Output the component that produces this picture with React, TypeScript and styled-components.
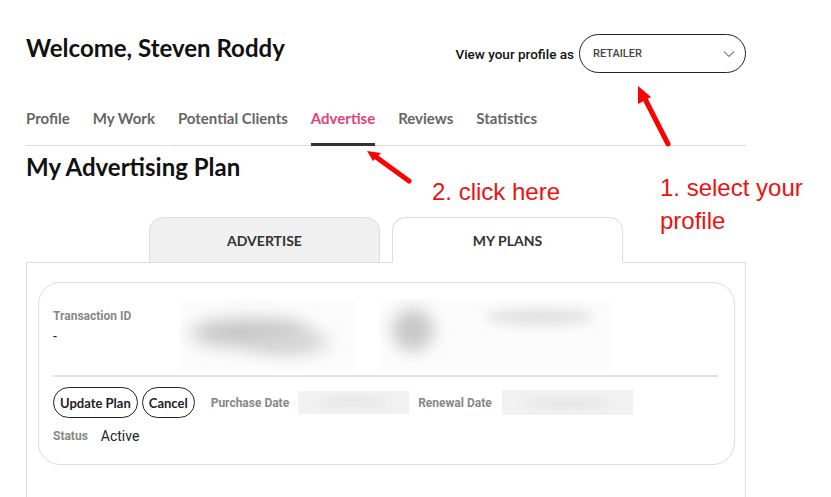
import styled, { createGlobalStyle } from "styled-components";

const GlobalStyle = createGlobalStyle`
    html, body {
        margin: 0;
        padding: 0;
        background: #fff;
    }
    body {
        font-family: Lato, "Noto Sans", sans-serif;
        color: #222;
    }
`;

const Page = styled.div`
    position: relative;
    width: 831px;
    height: 497px;
    overflow: hidden;
    background: #fff;
`;

const Main = styled.div`
    width: 720px;
    margin-left: 26px;
    display: flex;
    flex-direction: column;
`;

const Header = styled.div`
    display: flex;
    justify-content: space-between;
    align-items: flex-start;
    padding-top: 33px;
`;

const Title = styled.h1`
    margin: 0;
    font-size: 24px;
    line-height: 30px;
    font-weight: 700;
    color: #111;
`;

const ProfileSwitch = styled.div`
    display: flex;
    align-items: center;
    gap: 5px;
    margin-top: 1px;
`;

const SwitchLabel = styled.span`
    font-family: Roboto, "Liberation Sans", sans-serif;
    font-size: 13.5px;
    font-weight: 500;
    color: #111;
`;

const Select = styled.div`
    width: 167px;
    height: 39px;
    box-sizing: border-box;
    border: 1px solid #222;
    border-radius: 20px;
    display: flex;
    align-items: center;
    justify-content: space-between;
    padding: 0 10px 0 13px;
    font-family: Roboto, "Liberation Sans", sans-serif;
    font-size: 11px;
    font-weight: 500;
    color: #444;
`;

const NavBar = styled.nav`
    display: flex;
    gap: 23px;
    margin-top: 35px;
    border-bottom: 1px solid #ddd;
`;

const NavItem = styled.span<{ $active?: boolean }>`
    font-size: 15px;
    line-height: 20px;
    font-weight: 700;
    padding-bottom: 15px;
    color: ${(p) => (p.$active ? "#e8407b" : "#666")};
    border-bottom: 3px solid ${(p) => (p.$active ? "#333" : "transparent")};
    margin-bottom: -1px;
`;

const SectionTitle = styled.h2`
    margin: 6px 0 0;
    font-size: 24px;
    line-height: 30px;
    font-weight: 700;
    color: #111;
`;

const TabBar = styled.div`
    display: flex;
    justify-content: center;
    gap: 12px;
    margin-top: 35px;
    position: relative;
    z-index: 1;
    margin-bottom: -1px;
`;

const Tab = styled.div<{ $active?: boolean }>`
    width: 231px;
    height: 46px;
    box-sizing: border-box;
    display: flex;
    align-items: center;
    justify-content: center;
    border: 1px solid #ddd;
    border-bottom-color: ${(p) => (p.$active ? "#fff" : "#ddd")};
    border-radius: 14px 14px 0 0;
    background: ${(p) => (p.$active ? "#fff" : "#f0f0f0")};
    font-size: 14px;
    font-weight: 700;
    color: #333;
`;

const Panel = styled.div`
    border: 1px solid #ddd;
    height: 260px;
    padding: 19px 10px 0 11px;
`;

const Card = styled.div`
    border: 1px solid #ddd;
    border-radius: 22px;
    padding: 16px 16px 19px 14px;
    display: flex;
    flex-direction: column;
`;

const TopRow = styled.div`
    display: flex;
    height: 72px;
`;

const InfoCol = styled.div`
    width: 127px;
    padding-top: 10px;
    display: flex;
    flex-direction: column;
    gap: 5px;
`;

const Label = styled.span`
    font-family: Roboto, "Liberation Sans", sans-serif;
    font-size: 12px;
    font-weight: 700;
    color: #888;
`;

const Value = styled.span`
    font-family: Roboto, "Liberation Sans", sans-serif;
    font-size: 14px;
    color: #222;
`;

const Blurred = styled.div<{ $w: number; $bg?: string }>`
    width: ${(p) => p.$w}px;
    height: 100%;
    position: relative;
    overflow: hidden;
    background: ${(p) => p.$bg ?? "#fcfcfc"};
`;

const Smudge = styled.div<{ $x: number; $y: number; $w: number; $h: number; $c: string; $b: number }>`
    position: absolute;
    left: ${(p) => p.$x}px;
    top: ${(p) => p.$y}px;
    width: ${(p) => p.$w}px;
    height: ${(p) => p.$h}px;
    background: ${(p) => p.$c};
    border-radius: 50%;
    filter: blur(${(p) => p.$b}px);
`;

const Divider = styled.div`
    margin-top: 4px;
    border-top: 2px solid #e2e2e2;
`;

const ActionRow = styled.div`
    display: flex;
    align-items: center;
    margin-top: 10px;
    height: 31px;
`;

const PillButton = styled.button`
    height: 31px;
    padding: 0 6px;
    border: 1px solid #222;
    border-radius: 16px;
    background: #fff;
    font-family: Lato, sans-serif;
    font-size: 13px;
    font-weight: 700;
    color: #222;
    margin-right: 4px;
`;

const DateLabel = styled(Label)<{ $before: number; $after: number }>`
    margin: 0 ${(p) => p.$after}px 0 ${(p) => p.$before}px;
`;

const DateBox = styled.div<{ $w: number; $h: number }>`
    width: ${(p) => p.$w}px;
    height: ${(p) => p.$h}px;
    background: #f2f2f2;
    position: relative;
    overflow: hidden;
`;

const StatusRow = styled.div`
    display: flex;
    align-items: center;
    gap: 13px;
    margin-top: 9px;
    height: 18px;
`;

const Overlay = styled.svg`
    position: absolute;
    left: 0;
    top: 0;
    pointer-events: none;
`;

const Note = styled.div<{ $x: number; $y: number }>`
    position: absolute;
    left: ${(p) => p.$x}px;
    top: ${(p) => p.$y}px;
    font-family: "Liberation Sans", Arial, sans-serif;
    font-size: 24px;
    line-height: 33px;
    color: #f01010;
`;

const Chevron = () => (
    <svg width="12" height="8" viewBox="0 0 12 8">
        <polyline points="1,1.5 6,6.5 11,1.5" fill="none" stroke="#888" strokeWidth="1.2" />
    </svg>
);

export default function App() {
    return (
        <Page>
            <GlobalStyle />
            <Main>
                <Header>
                    <Title>Welcome, Steven Roddy</Title>
                    <ProfileSwitch>
                        <SwitchLabel>View your profile as</SwitchLabel>
                        <Select>
                            <span>RETAILER</span>
                            <Chevron />
                        </Select>
                    </ProfileSwitch>
                </Header>
                <NavBar>
                    <NavItem>Profile</NavItem>
                    <NavItem>My Work</NavItem>
                    <NavItem>Potential Clients</NavItem>
                    <NavItem $active>Advertise</NavItem>
                    <NavItem>Reviews</NavItem>
                    <NavItem>Statistics</NavItem>
                </NavBar>
                <SectionTitle>My Advertising Plan</SectionTitle>
                <TabBar>
                    <Tab>ADVERTISE</Tab>
                    <Tab $active>MY PLANS</Tab>
                </TabBar>
                <Panel>
                    <Card>
                        <TopRow>
                            <InfoCol>
                                <Label>Transaction ID</Label>
                                <Value>-</Value>
                            </InfoCol>
                            <Blurred $w={175}>
                                <Smudge $x={10} $y={20} $w={120} $h={28} $c="#c4c4c4" $b={9} />
                                <Smudge $x={70} $y={32} $w={80} $h={22} $c="#d2d2d2" $b={9} />
                            </Blurred>
                            <Blurred $w={25} $bg="#fff" />
                            <Blurred $w={90}>
                                <Smudge $x={12} $y={10} $w={42} $h={42} $c="#c8c8c8" $b={8} />
                            </Blurred>
                            <Blurred $w={140}>
                                <Smudge $x={15} $y={10} $w={110} $h={16} $c="#e0e0e0" $b={6} />
                            </Blurred>
                        </TopRow>
                        <Divider />
                        <ActionRow>
                            <PillButton>Update Plan</PillButton>
                            <PillButton>Cancel</PillButton>
                            <DateLabel $before={12} $after={9}>Purchase Date</DateLabel>
                            <DateBox $w={111} $h={23}>
                                <Smudge $x={20} $y={6} $w={70} $h={10} $c="#e4e4e4" $b={5} />
                            </DateBox>
                            <DateLabel $before={9} $after={10}>Renewal Date</DateLabel>
                            <DateBox $w={131} $h={25}>
                                <Smudge $x={20} $y={8} $w={90} $h={10} $c="#e4e4e4" $b={5} />
                            </DateBox>
                        </ActionRow>
                        <StatusRow>
                            <Label>Status</Label>
                            <Value>Active</Value>
                        </StatusRow>
                    </Card>
                </Panel>
            </Main>
            <Overlay width="831" height="497" viewBox="0 0 831 497">
                <g stroke="#ff0000" strokeWidth="5" strokeLinecap="round" fill="#ff0000">
                    <line x1="409" y1="181" x2="376" y2="157" />
                    <line x1="668" y1="144" x2="644" y2="97" />
                </g>
                <g fill="#ff0000">
                    <polygon points="367,151 373,161 381,153" />
                    <polygon points="638,86 638,104 651,97" />
                </g>
            </Overlay>
            <Note $x={432} $y={175}>2. click here</Note>
            <Note $x={660} $y={171}>
                1. select your
                <br />
                profile
            </Note>
        </Page>
    );
}
